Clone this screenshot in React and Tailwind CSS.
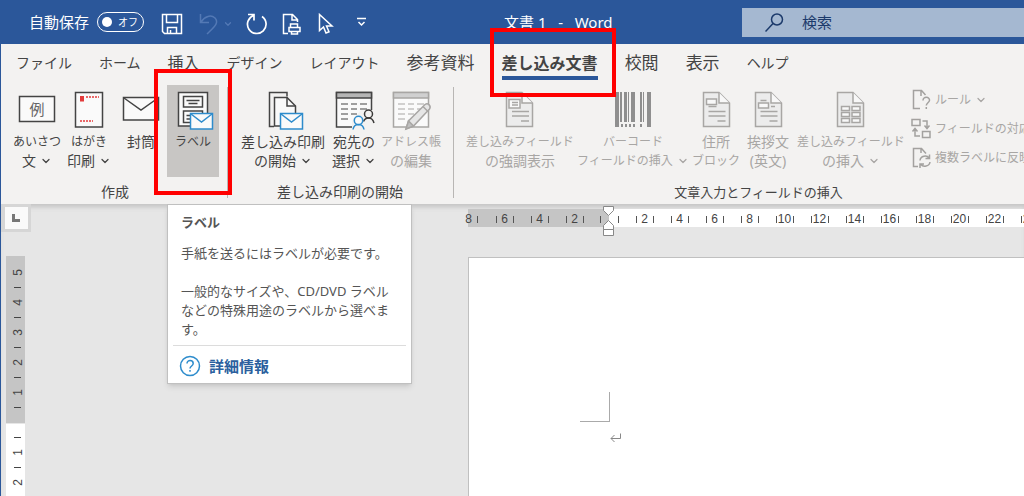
// src/App.jsx
import { ChevronDown } from 'lucide-react';

const tabs = [
  { label: 'ファイル', size: 'text-sm' },
  { label: 'ホーム', size: 'text-sm' },
  { label: '挿入', size: 'text-base' },
  { label: 'デザイン', size: 'text-sm' },
  { label: 'レイアウト', size: 'text-sm' },
  { label: '参考資料', size: 'text-[17px]' },
  { label: '差し込み文書', size: 'text-base', active: true },
  { label: '校閲', size: 'text-[17px]' },
  { label: '表示', size: 'text-[17px]' },
  { label: 'ヘルプ', size: 'text-sm' },
];

const Icon = ({ children }) => (
  <svg width="40" height="39" viewBox="0 0 40 39" fill="none" stroke="currentColor" strokeWidth="1.5" className="overflow-visible" aria-hidden="true">
    {children}
  </svg>
);

const BlueEnvelope = () => (
  <g stroke="#2e8ccc">
    <path d="M17.5 22.5h22v15.5h-22z" fill="#fafafa" />
    <path d="M18 23l10.500 8L39 23" />
  </g>
);

const Page = ({ x = 7 }) => (
  <g transform={`translate(${x} 0)`}>
    <path d="M0.500 1.500H16L26.500 12v23.500H0.500z" fill="#ececec" />
    <path d="M16 1.500V12h10.500" fill="#f8f8f8" />
  </g>
);

const GreetingIcon = () => (
  <Icon>
    <path d="M2.500 5.500h35v25h-35z" fill="#fafafa" />
    <text x="20" y="24" textAnchor="middle" fontSize="15" fill="#666" stroke="none">例</text>
  </Icon>
);

const PostcardIcon = () => (
  <Icon>
    <path d="M6.500 1.500h27v34.500h-27z" fill="#fafafa" />
    <path d="M11 5h4v5.500h-4z" fill="#e33b3b" stroke="none" />
    <path d="M17 6h13M11 30h13" stroke="#e33b3b" strokeDasharray="2 1" />
  </Icon>
);

const EnvelopeIcon = () => (
  <Icon>
    <path d="M2.500 6.500h35V29h-35z" fill="#fafafa" />
    <path d="M3 7l17 12L37 7" />
  </Icon>
);

const LabelIcon = () => (
  <Icon>
    <path d="M5.500 1.500h29V35h-29z" fill="#fafafa" />
    <path d="M10.500 5.500h19v10.500h-19zM10.500 20h19v11.500h-19zM13.500 9.500h13M15.500 12.500h9M13.500 24.500h5M13.500 28h4" />
    <BlueEnvelope />
  </Icon>
);

const StartMergeIcon = () => (
  <Icon>
    <path d="M11 35.500H6.500v-34h17.500v4" />
    <path d="M11.500 6.500H24l8.500 8.500v20h-21z" fill="#fafafa" />
    <path d="M24 6.500V15h8.500" />
    <BlueEnvelope />
  </Icon>
);

const TableShape = ({ head }) => (
  <>
    <path d="M2.500 1.500h35V36h-35z" fill="#fafafa" />
    <path d="M2.500 1.500h35v5.500h-35z" fill={head} />
    <path d="M7 13h7M17 13h6M26 13h7M7 18h7M17 18h6M26 18h7M7 23h7M17 23h6M7 28h7" strokeWidth="1.2" />
  </>
);

const RecipientsIcon = () => (
  <Icon>
    <TableShape head="#b5b5b5" />
    <path d="M18 39v-9l9-11h14v20z" fill="#f3f2f1" stroke="none" />
    <g stroke="#3b3a39">
      <circle cx="34.500" cy="23" r="4" />
      <path d="M29.500 30.500c1-2.500 3-3.500 5-3.500s4.500 1 5.500 5" />
    </g>
    <g stroke="#2e8ccc">
      <circle cx="24.500" cy="29.500" r="4.200" fill="#fafafa" />
      <path d="M19 38.500c.5-3 2.500-5 5.500-5s5 2 5.500 5" />
    </g>
  </Icon>
);

const EditListIcon = () => (
  <Icon>
    <TableShape head="#d0d0d0" />
    <path d="M15 38l2.500-8L34 13.500c3-2 6.500 1.500 4.500 4.500L22.500 35z" fill="#e6e6e6" />
    <path d="M15 38l2.500-8 5 5zM32 15.500l5 5" fill="#c0c0c0" />
  </Icon>
);

const HighlightIcon = () => (
  <Icon>
    <Page x={6} />
    <path d="M9 8.500h11v8.500H9z" fill="#f8f8f8" />
    <path d="M12 11.500h6M12 14h6M12 20.500h17M12 25h17M21 30h8" />
  </Icon>
);

const BarcodeIcon = () => (
  <Icon>
    <g fill="#8f8f8f" stroke="none">
      <path d="M2 1h4v35H2zM7 1h2v30H7zM11 1h3v30h-3zM15 1h1v30h-1zM18 1h4v30h-4zM27 1h2v30h-2zM30 1h1v30h-1zM34 1h4v35h-4z" />
      <path d="M8 33h2v3H8zM12 33h2v3h-2zM16 33h2v3h-2zM20 33h2v3h-2zM27 33h2v3h-2z" />
    </g>
  </Icon>
);

const AddressIcon = () => (
  <Icon>
    <Page />
    <path d="M10.500 8h10v5.500h-10z" fill="#f8f8f8" />
    <path d="M12.500 15.500h8M12.500 20.500h17M12.500 25h17M21.500 30h8" />
  </Icon>
);

const GreetingLineIcon = () => (
  <Icon>
    <Page />
    <path d="M10.500 12h10v5h-10z" fill="#f8f8f8" />
    <path d="M12.500 9.500h6M23 15.500h4M12.500 20.500h17M12.500 25h17M21.500 30h8" />
  </Icon>
);

const InsertFieldIcon = () => (
  <Icon>
    <Page x={6} />
    <path d="M10.500 15.500h8v4h-8zM21 15.500h8v4h-8zM10.500 21.500h8v4h-8zM21 21.500h8v4h-8zM10.500 27.500h8v4h-8zM21 27.500h8v4h-8z" fill="#f8f8f8" />
  </Icon>
);

const SmallIcon = ({ children }) => (
  <svg width="20" height="21" viewBox="0 0 20 21" fill="none" stroke="#a3a19f" strokeWidth="1.500" className="shrink-0" aria-hidden="true">
    {children}
  </svg>
);

const RuleIcon = () => (
  <SmallIcon>
    <path d="M9 19.500H2.500v-18h8l4 4.500M10 1.500V7" />
    <path d="M12 11.500c0-4.500 7-4 6.500 0-.3 2.200-3.200 2.500-3.200 5M15.300 18v2" />
  </SmallIcon>
);

const MatchIcon = () => (
  <SmallIcon>
    <path d="M1 1.500h8v6H1zM11.500 13.500h7.500v6h-7.500z" />
    <path d="M11.500 3h4.500v7M13.500 7.500l2.500 3 2.500-3M9 18H4v-7M1.500 13.500l2.500-3 2.500 3" />
  </SmallIcon>
);

const UpdateIcon = () => (
  <SmallIcon>
    <path d="M7 19.500H2.500v-18h8l4.500 5M10 1.500V6" />
    <path d="M9 13.500c.5-5 7-5.500 9-2.500M18.500 7.500v4h-4M19 15c-.5 4.500-7 5.500-9 2.500M9 21v-4h4" />
  </SmallIcon>
);

const Line = ({ text, small, chevron }) => (
  <span className={`flex h-[19px] items-center justify-center whitespace-nowrap leading-[19px] ${small ? 'text-xs' : 'text-sm'}`}>
    {text}
    {chevron && <ChevronDown className="ml-1 h-3 w-3" strokeWidth={2.5} />}
  </span>
);

const RibbonButton = ({ icon: IconShape, lines, width, disabled, selected }) => (
  <button
    type="button"
    disabled={disabled}
    className={`flex h-[92px] shrink-0 flex-col items-center pt-[6px] ${width} ${selected ? 'bg-[#c8c6c4]' : ''} ${disabled ? 'text-[#a8a6a4]' : 'text-[#444]'}`}
  >
    <IconShape />
    <span className="mt-[2px] block">
      {lines.map((line) => (
        <Line key={line.text} {...line} />
      ))}
    </span>
  </button>
);

const Group = ({ title, className, children }) => (
  <section aria-label={title} className={`flex shrink-0 flex-col ${className}`}>
    <div className="flex">{children}</div>
    <div className={`mt-[5px] text-center leading-5 text-[#444] ${title.length > 10 ? 'text-[13px]' : 'text-sm'}`}>{title}</div>
  </section>
);

const Divider = () => <div className="mt-[2px] h-[111px] w-px shrink-0 bg-[#b8b6b4]" />;

const SmallCommand = ({ icon: IconShape, text, chevron }) => (
  <button type="button" disabled className="flex h-[29px] items-center whitespace-nowrap text-xs text-[#a8a6a4]">
    <IconShape />
    <span className="ml-1">{text}</span>
    {chevron && <ChevronDown className="ml-1 h-3 w-3" strokeWidth={2.5} />}
  </button>
);

const TitleBar = () => (
  <header className="grid h-11 shrink-0 grid-cols-[504px_238px_1fr] items-center bg-[#2b579a] text-[15px] text-white">
    <div className="flex items-center pl-[29px]">
      <span id="autosave">自動保存</span>
      <button type="button" role="switch" aria-checked="false" aria-labelledby="autosave" className="ml-2 flex h-5 w-[47px] items-center justify-between rounded-full border border-white pl-1 pr-[5px] text-[10px]">
        <span className="h-[10px] w-[10px] shrink-0 rounded-full bg-white" />
        <span className="whitespace-nowrap">オフ</span>
      </button>
      <button type="button" aria-label="上書き保存" className="ml-[17px] mt-1">
        <svg width="22" height="22" viewBox="0 0 22 22" fill="none" stroke="currentColor" strokeWidth="1.500">
          <path d="M1.500 1.500h19v19h-17l-2-2zM5.500 1.500v8h11v-8M6.500 20.500v-6h9v6M9.500 20.500V17" />
        </svg>
      </button>
      <button type="button" disabled aria-label="元に戻す" className="ml-4 mt-1 flex items-center text-[#5379b5]">
        <svg width="20" height="22" viewBox="0 0 20 22" fill="none" stroke="currentColor" strokeWidth="1.500">
          <path d="M1.500 1v8.500H10M2 9C6 3 12 1.500 16 5c4.500 5-1 9-8 16" />
        </svg>
        <ChevronDown className="ml-1 h-[10px] w-[10px]" strokeWidth={3} />
      </button>
      <button type="button" aria-label="やり直し" className="ml-[13px] mt-1">
        <svg width="22" height="22" viewBox="0 0 22 22" fill="none" stroke="currentColor" strokeWidth="1.700">
          <path d="M2 1.500h6V7.500M7.500 2.500A9.300 9.300 0 1 0 16 3.500" />
        </svg>
      </button>
      <button type="button" aria-label="印刷プレビューと印刷" className="ml-[14px] mt-1">
        <svg width="20" height="22" viewBox="0 0 20 22" fill="none" stroke="currentColor" strokeWidth="1.500">
          <path d="M6 20.500H1.500v-19h9l5 5V9M10 1.500V7h5.500" />
          <path d="M8.500 15v-4h7v4M7 18.500v-4h11v4zM9.500 18v3h6v-3" />
        </svg>
      </button>
      <button type="button" aria-label="オブジェクトの選択" className="ml-4 mt-1">
        <svg width="16" height="22" viewBox="0 0 16 22" fill="none" stroke="currentColor" strokeWidth="1.500">
          <path d="M1.500 1.500v16l4-3.500 2.500 6 3-1.200-2.500-5.800h5.500z" />
        </svg>
      </button>
      <button type="button" aria-label="クイックアクセスツールバーのユーザー設定" className="ml-[22px]">
        <svg width="11" height="10" viewBox="0 0 11 10" fill="none" stroke="currentColor" strokeWidth="1.500">
          <path d="M1 1.500h9M2.500 5l3 3 3-3" />
        </svg>
      </button>
    </div>
    <h1 className="whitespace-pre">文書 1   -   Word</h1>
    <label className="flex h-[29px] items-center bg-[#a5b8d1] pl-[23px] text-[#1c3a6b]">
      <svg width="19" height="19" viewBox="0 0 19 19" fill="none" stroke="currentColor" strokeWidth="1.500" className="shrink-0" aria-hidden="true">
        <circle cx="12" cy="6.500" r="5.500" />
        <path d="M8 10.500l-7.500 8" />
      </svg>
      <input type="search" placeholder="検索" aria-label="検索" className="ml-[18px] w-full bg-transparent outline-none placeholder:text-[#1c3a6b]" />
    </label>
  </header>
);

const TabRow = () => (
  <nav className="flex h-[41px] shrink-0 gap-[27px] pl-[15px] pt-[7px] text-[#444]">
    {tabs.map(({ label, size, active }) => (
      <a
        key={label}
        href="#"
        className={`flex h-[29px] shrink-0 items-center whitespace-nowrap border-b-4 pb-px ${size} ${active ? 'border-[#2b579a] font-bold' : 'border-transparent'}`}
      >
        {label}
      </a>
    ))}
  </nav>
);

const Ribbon = () => (
  <div className="flex h-[119px] shrink-0">
    <Group title="作成" className="pl-[10px] pr-2">
      <RibbonButton icon={GreetingIcon} width="w-[52px]" lines={[{ text: 'あいさつ', small: true }, { text: '文', chevron: true }]} />
      <RibbonButton icon={PostcardIcon} width="w-[52px]" lines={[{ text: 'はがき', small: true }, { text: '印刷', chevron: true }]} />
      <RibbonButton icon={EnvelopeIcon} width="w-[52px]" lines={[{ text: '封筒' }]} />
      <RibbonButton icon={LabelIcon} width="w-[52px]" selected lines={[{ text: 'ラベル', small: true }]} />
    </Group>
    <Divider />
    <Group title="差し込み印刷の開始" className="pl-[9px] pr-[10px]">
      <RibbonButton icon={StartMergeIcon} width="w-[92px]" lines={[{ text: '差し込み印刷' }, { text: 'の開始', chevron: true }]} />
      <RibbonButton icon={RecipientsIcon} width="w-[50px]" lines={[{ text: '宛先の' }, { text: '選択', chevron: true }]} />
      <RibbonButton icon={EditListIcon} width="w-[64px]" disabled lines={[{ text: 'アドレス帳', small: true }, { text: 'の編集' }]} />
    </Group>
    <Divider />
    <Group title="文章入力とフィールドの挿入" className="pl-[10px] pr-6">
      <div className="flex pr-[22px]">
        <RibbonButton icon={HighlightIcon} width="w-[112px]" disabled lines={[{ text: '差し込みフィールド', small: true }, { text: 'の強調表示' }]} />
        <RibbonButton icon={BarcodeIcon} width="w-[114px]" disabled lines={[{ text: 'バーコード', small: true }, { text: 'フィールドの挿入', small: true, chevron: true }]} />
        <RibbonButton icon={AddressIcon} width="w-[52px]" disabled lines={[{ text: '住所' }, { text: 'ブロック', small: true }]} />
        <RibbonButton icon={GreetingLineIcon} width="w-[52px]" disabled lines={[{ text: '挨拶文' }, { text: '(英文)' }]} />
        <RibbonButton icon={InsertFieldIcon} width="w-[114px]" disabled lines={[{ text: '差し込みフィールド', small: true }, { text: 'の挿入', chevron: true }]} />
        <div className="flex flex-col pl-[3px]">
          <SmallCommand icon={RuleIcon} text="ルール" chevron />
          <SmallCommand icon={MatchIcon} text="フィールドの対応" />
          <SmallCommand icon={UpdateIcon} text="複数ラベルに反映" />
        </div>
      </div>
    </Group>
  </div>
);

const RulerCell = ({ value }) => (
  <span className="flex w-[35px] shrink-0 items-center justify-center">
    <span className="flex h-[7px] w-[18px] items-center justify-center border-x border-[#555]">{value}</span>
  </span>
);

const IndentMarker = () => (
  <svg width="12" height="30" viewBox="0 0 12 30" fill="#fff" stroke="#888" className="absolute -top-[3px] left-[135px]" aria-hidden="true">
    <path d="M0.500 0.500h10v4l-5 5-5-5zM5.500 14.500l5 5v4h-10v-4zM0.500 23.500h10v6h-10z" />
  </svg>
);

const HorizontalRuler = () => (
  <div className="relative mt-[5px] flex h-[18px] pt-px font-['Liberation_Sans',sans-serif] text-xs text-[#444]">
    <div className="-mt-px flex w-[141px] shrink-0 items-center bg-[#c5c5c5] pt-[2px]">
      <span className="flex w-[19px] shrink-0 items-center">
        <span className="flex h-[7px] w-[10px] items-center justify-end border-r border-[#555] pr-[5px]">8</span>
      </span>
      {[6, 4, 2].map((n) => (
        <RulerCell key={n} value={n} />
      ))}
      <span className="ml-2 h-[7px] w-px bg-[#555]" />
    </div>
    <div className="-mt-px flex flex-1 items-center overflow-hidden bg-white pt-[2px]">
      <span className="flex w-[18px] shrink-0 justify-center">
        <span className="h-[7px] w-px bg-[#555]" />
      </span>
      {[2, 4, 6, 8, 10, 12, 14, 16, 18, 20, 22, 24].map((n) => (
        <RulerCell key={n} value={n} />
      ))}
    </div>
    <IndentMarker />
  </div>
);

const VerticalMarks = ({ marks }) =>
  marks.map((mark, i) => (
    <span key={i} className="flex h-[15px] shrink-0 items-center justify-center">
      {mark ? <span className="rotate-180 leading-none [writing-mode:vertical-rl]">{mark}</span> : <span className="h-px w-[7px] bg-[#444]" />}
    </span>
  ));

const VerticalRuler = () => (
  <div className="ml-[5px] mt-6 flex w-[19px] flex-1 flex-col overflow-hidden font-['Liberation_Sans',sans-serif] text-xs text-[#444]">
    <div className="flex h-[167px] shrink-0 flex-col bg-[#c5c5c5] pl-1 pt-[9px]">
      <VerticalMarks marks={['5', null, '4', null, '3', null, '2', null, '1', null]} />
    </div>
    <div className="mt-px flex flex-1 flex-col bg-white pl-1 pt-[6px]">
      <VerticalMarks marks={[null, '1', null, '2', null]} />
    </div>
  </div>
);

const Workspace = () => (
  <main className="flex min-h-0 flex-1 bg-[#e6e6e6] shadow-[inset_0_5px_5px_-2px_#c4c4c4]">
    <div className="flex w-[30px] shrink-0 flex-col">
      <div className="flex h-7 items-center justify-center bg-[#d6d6d6]">
        <button type="button" aria-label="左揃えタブ" className="flex h-[22px] w-[23px] items-center justify-center bg-[#fafafa]">
          <span className="h-2 w-2 border-b-3 border-l-3 border-[#777]" />
        </button>
      </div>
      <VerticalRuler />
    </div>
    <div className="flex min-w-0 flex-1 flex-col pl-[437px]">
      <HorizontalRuler />
      <article className="mt-[30px] flex-1 border-l border-t border-[#c0c0c0] bg-white pl-[111px] pt-[134px]">
        <div className="h-[30px] w-[30px] border-b border-r border-[#aaa]" />
        <svg width="12" height="11" viewBox="0 0 12 11" fill="none" stroke="#888" className="ml-[30px] mt-[11px]" aria-hidden="true">
          <path d="M10.500 0.500v5H1M4.500 2L1 5.500 4.500 9" />
        </svg>
      </article>
    </div>
  </main>
);

const Tooltip = () => (
  <div role="tooltip" className="absolute left-[167px] top-[204px] w-[245px] border border-[#c0c0c0] bg-white text-[13px] leading-[19px] text-[#555] shadow-md">
    <div className="px-[13px] pt-2">
      <p className="font-bold">ラベル</p>
      <p className="mt-3">手紙を送るにはラベルが必要です。</p>
      <p className="mt-[19px]">一般的なサイズや、CD/DVD ラベルなどの特殊用途のラベルから選べます。</p>
    </div>
    <div className="mx-[5px] mt-[6px] flex items-center gap-2 border-t border-[#dcdcdc] px-[6px] pb-[6px] pt-[9px]">
      <svg width="22" height="22" viewBox="0 0 22 22" fill="none" stroke="#2e8ccc" strokeWidth="1.500" aria-hidden="true">
        <circle cx="11" cy="11" r="9.500" />
        <path d="M8 8.500c0-4 6.200-3.800 6.200 0 0 2.500-3.200 2.500-3.200 5M11 15v1.800" />
      </svg>
      <a href="#" className="text-[15px] font-bold text-[#2b5f9e]">詳細情報</a>
    </div>
  </div>
);

const App = () => {
  return (
    <div className="relative flex h-screen flex-col overflow-hidden bg-[#f3f2f1] font-['Noto_Sans','Noto_Sans_CJK_JP',sans-serif]">
      <TitleBar />
      <div className="flex min-h-0 flex-1 flex-col border-l border-[#2b579a]">
        <TabRow />
        <Ribbon />
        <Workspace />
      </div>
      <Tooltip />
      <div className="pointer-events-none absolute left-[154px] top-[69px] h-[126px] w-[78px] border-4 border-[#ff0000]" />
      <div className="pointer-events-none absolute left-[490px] top-7 h-[69px] w-[126px] border-4 border-[#ff0000]" />
    </div>
  );
};

export default App;
